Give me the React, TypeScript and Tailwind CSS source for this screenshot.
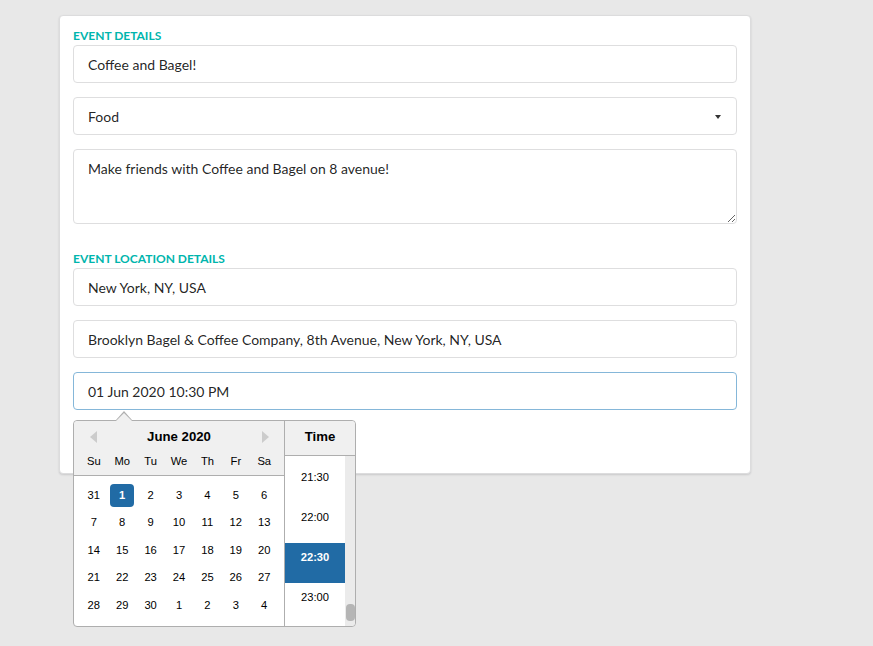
import React from "react";

const weeks: number[][] = [
  [31, 1, 2, 3, 4, 5, 6],
  [7, 8, 9, 10, 11, 12, 13],
  [14, 15, 16, 17, 18, 19, 20],
  [21, 22, 23, 24, 25, 26, 27],
  [28, 29, 30, 1, 2, 3, 4],
];

const dayNames = ["Su", "Mo", "Tu", "We", "Th", "Fr", "Sa"];
const times = ["21:30", "22:00", "22:30", "23:00"];

function SectionLabel({ text }: { text: string }) {
  return (
    <div className="h-[15px] text-[12px] leading-[11px] font-bold uppercase text-[#00b5ad]">
      {text}
    </div>
  );
}

function TextInput({ value, focused }: { value: string; focused?: boolean }) {
  return (
    <input
      readOnly
      value={value}
      className={`block h-[38px] w-full rounded-[4px] border bg-white px-[14px] text-[14px] text-[rgba(0,0,0,0.87)] outline-none ${
        focused ? "border-[#85b7d9]" : "border-[#dededf]"
      }`}
    />
  );
}

function DatePicker() {
  return (
    <div className="absolute left-0 top-[calc(100%+10px)] z-10 rounded-[4px] border border-[#aeaeae] bg-white font-['Liberation_Sans',Arial,sans-serif] text-[11.2px] text-black">
      <div className="absolute left-[42px] top-[-10px] h-0 w-0 border-x-[8px] border-b-[9px] border-x-transparent border-b-[#aeaeae]" />
      <div className="absolute left-[42px] top-[-8px] h-0 w-0 border-x-[8px] border-b-[8px] border-x-transparent border-b-[#f0f0f0]" />
      <div className="flex">
        {/* month */}
        <div className="w-[210px]">
          <div className="relative rounded-tl-[4px] border-b border-[#aeaeae] bg-[#f0f0f0] pt-[8px]">
            <div className="absolute left-[16px] top-[10px] h-0 w-0 border-y-[6px] border-r-[7px] border-y-transparent border-r-[#cccccc]" />
            <div className="absolute right-[15px] top-[10px] h-0 w-0 border-y-[6px] border-l-[7px] border-y-transparent border-l-[#cccccc]" />
            <div className="h-[16px] text-center text-[13.2px] leading-[16px] font-bold">June 2020</div>
            <div className="mt-[3px] flex px-[5.6px]">
              {dayNames.map((d) => (
                <div key={d} className="h-[27px] w-[28.45px] text-center leading-[27px]">
                  {d}
                </div>
              ))}
            </div>
          </div>
          <div className="px-[5.6px] py-[5.4px]">
            {weeks.map((w, i) => (
              <div key={i} className="flex h-[27.6px] items-center">
                {w.map((d, j) => {
                  const selected = i === 0 && j === 1;
                  return (
                    <div key={j} className="flex w-[28.45px] justify-center">
                      <div
                        className={`h-[23px] w-[24px] rounded-[4px] text-center leading-[23px] ${
                          selected ? "bg-[#216ba5] font-bold text-white" : ""
                        }`}
                      >
                        {d}
                      </div>
                    </div>
                  );
                })}
              </div>
            ))}
          </div>
        </div>
        {/* time */}
        <div className="flex w-[71px] flex-col border-l border-[#aeaeae]">
          <div className="h-[35px] rounded-tr-[4px] border-b border-[#aeaeae] bg-[#f0f0f0] pt-[8px] text-center text-[13.2px] leading-[16px] font-bold">
            Time
          </div>
          <div className="flex h-[170px] overflow-hidden rounded-br-[4px]">
            <div className="w-[60px] pt-[7px]">
              {times.map((t) => {
                const selected = t === "22:30";
                return (
                  <div
                    key={t}
                    className={`h-[40px] pt-[7px] text-center leading-[14px] ${
                      selected ? "bg-[#216ba5] font-bold text-white" : ""
                    }`}
                  >
                    {t}
                  </div>
                );
              })}
            </div>
            <div className="flex w-[10px] flex-col justify-end bg-[#ebebeb] pb-[5px]">
              <div className="mx-auto h-[17px] w-[9px] rounded-[4px] bg-[#b5b5b5]" />
            </div>
          </div>
        </div>
      </div>
    </div>
  );
}

export default function App() {
  return (
    <div className="min-h-screen bg-[#e8e8e8] pl-[59px] pt-[15px] font-['Lato',sans-serif]">
      <div className="w-[692px] rounded-[4px] border border-[#dcdcdd] bg-white px-[13px] pb-[13px] pt-[14px] shadow-[0_1px_2px_0_rgba(34,36,38,0.15)]">
        <SectionLabel text="Event Details" />
        <TextInput value="Coffee and Bagel!" />
        <div className="relative mt-[14px] flex h-[38px] items-center rounded-[4px] border border-[#dededf] px-[14px] text-[14px] text-[rgba(0,0,0,0.87)]">
          Food
          <span className="absolute right-[15px] top-[17px] h-0 w-0 border-x-[3.5px] border-t-[4px] border-x-transparent border-t-[#333333]" />
        </div>
        <textarea
          readOnly
          value="Make friends with Coffee and Bagel on 8 avenue!"
          className="mt-[14px] block h-[75px] w-full resize-y rounded-[4px] border border-[#dededf] px-[14px] py-[10px] text-[14px] leading-[18px] text-[rgba(0,0,0,0.87)] outline-none"
        />
        <div className="mt-[29px]">
          <SectionLabel text="Event Location Details" />
        </div>
        <TextInput value="New York, NY, USA" />
        <div className="mt-[14px]">
          <TextInput value="Brooklyn Bagel & Coffee Company, 8th Avenue, New York, NY, USA" />
        </div>
        <div className="relative mt-[14px]">
          <TextInput value="01 Jun 2020 10:30 PM" focused />
          <DatePicker />
        </div>
        <div className="h-[50px]" />
      </div>
    </div>
  );
}
